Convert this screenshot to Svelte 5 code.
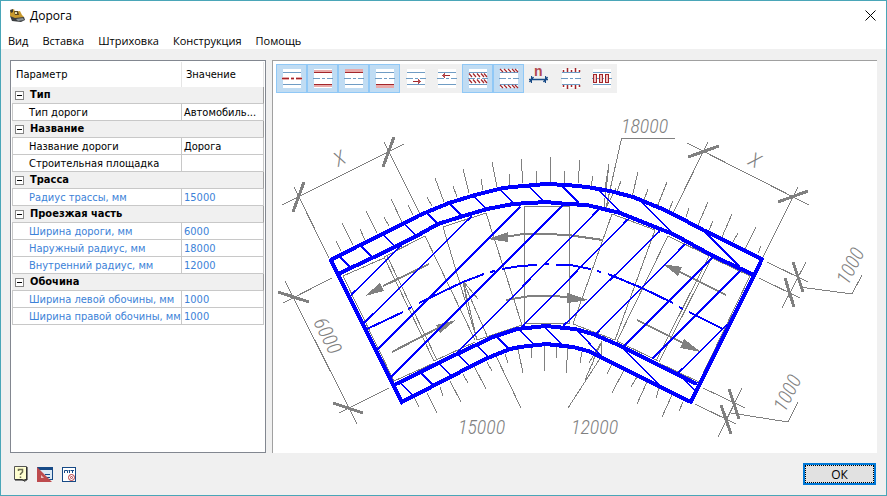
<script>
  const menu = ['Вид', 'Вставка', 'Штриховка', 'Конструкция', 'Помощь'];

  let groups = $state([
    { name: 'Тип', open: true, rows: [{ k: 'Тип дороги', v: 'Автомобиль...' }] },
    {
      name: 'Название', open: true,
      rows: [{ k: 'Название дороги', v: 'Дорога' }, { k: 'Строительная площадка', v: '' }]
    },
    { name: 'Трасса', open: true, rows: [{ k: 'Радиус трассы, мм', v: '15000', num: true }] },
    {
      name: 'Проезжая часть', open: true,
      rows: [
        { k: 'Ширина дороги, мм', v: '6000', num: true },
        { k: 'Наружный радиус, мм', v: '18000', num: true },
        { k: 'Внутренний радиус, мм', v: '12000', num: true }
      ]
    },
    {
      name: 'Обочина', open: true,
      rows: [
        { k: 'Ширина левой обочины, мм', v: '1000', num: true },
        { k: 'Ширина правой обочины, мм', v: '1000', num: true }
      ]
    }
  ]);

  let tools = $state([
    { id: 'axis', label: 'Осевая линия', on: true },
    { id: 'edges', label: 'Кромки', on: true },
    { id: 'left', label: 'Левая обочина', on: true },
    { id: 'right', label: 'Правая обочина', on: true },
    { id: 'forward', label: 'Прямое направление', on: false },
    { id: 'back', label: 'Обратное направление', on: false },
    { id: 'hatchRoad', label: 'Штриховка дороги', on: true },
    { id: 'hatchSide', label: 'Штриховка обочин', on: true },
    { id: 'dim', label: 'Размер', on: false },
    { id: 'slope', label: 'Откосы', on: false },
    { id: 'slabs', label: 'Плиты', on: false }
  ]);

  // Short and long slope strokes along both shoulders
  const slopeStrokes =
    'M336 241L341 251M342 223L353 245M360 229L365 240M366 211L377 233M384 217L389 226M391 199L402 222M408 205L413 215M427 197L432 206M435 178L444 202M453 186L457 197M463 169L469 193M481 179L483 190M492 162L497 187M509 174L510 185M521 159L523 183M536 171V183M551 157L550 183M565 171L564 183M580 160L578 183M593 176L591 187M609 164L605 188M621 181L616 194M638 172L632 197M648 189L644 200M667 182L657 207M673 201L669 210M689 208L686 217M708 202L698 225M713 221L709 230M732 214L722 237M738 233L733 242M756 227L745 249M761 246L758 253' +
    'M413 395L419 407M427 393L437 413M440 387L443 396M450 381L461 402M463 374L468 383M474 366L486 389M487 362L492 371M505 354L508 363M518 349L523 373M531 347L532 358M544 346V371M556 347V358M568 347L566 373M582 352L580 363M595 355L592 365M612 364L607 374M624 370L612 393M637 377L631 387M647 382L637 404M659 388L656 398M672 395L662 417M683 402L679 411';

  const slabs =
    'M524.5 323V206.5H569.5V323ZM486 213L522 325L477 340L443 227ZM425 236L475 340M384 257L425 236M384 257L434 361M387 256L437 360M434 361L475 342M343 276L384 258M343 276L394 381L434 363' +
    'M612 214L573 324L615 340L655 230ZM668 236L617 341M668 236L709 256M709 256L656 361M712 257L659 362M617 341L658 361M712 258L750 276L699 382L659 363';

  const dims =
    'M282 205L404 144M294 187L329 258M384 142L420 214M687 143L809 205M708 142L673 213M798 187L763 257' +
    'M285 281L357 424M283 303L332 278M339 413L389 388' +
    'M767 262L808 282M759 278L800 298M806 262L782 308M800 287L852 294L862 275' +
    'M703 388L745 408M695 404L736 424M742 388L718 437M731 413L788 422L798 402' +
    'M675 138.5H621.5L606 208M609 165L604 207M606 208L616 188' +
    'M463 281L467 303M463 281L478 299M463 281L488 338M496 356L521 408M463 281L477 340' +
    'M602 341L585 380M602 341L601 357L568 408M602 341L589 363';

  const dimTicks =
    'M293 212L304 182M383 167L394 137M688 157L719 146M778 202L808 191M278 292L309 302M333 403L363 413M793 262L803 292M785 278L794 307M729 389L739 419M721 405L731 434';

  const roadHatch =
    'M351 295L402 245M364 323L472 216M377 350L520 207M391 377L563 205M457 353L598 210M522 327L628 219M563 326L660 231M596 334L685 244M623 347L713 257M652 359L740 271M678 373L727 325';

  const sideHatch =
    'M339 256L351 268M360 245L372 257M383 234L394 246M404 224L416 235M427 213L438 224M449 203L461 215M474 197L486 208M501 190L513 203M530 187L543 201M563 187L579 203M600 191L620 212M643 203L672 233M703 230L740 267' +
    'M402 384L412 395M421 373L433 385M439 364L452 376M458 354L470 367M477 345L488 357M497 337L509 349M519 330L533 343M545 328L562 344M577 330L602 357M623 348L659 385M678 373L695 391';

  const outline =
    'M331 260L358 246L383 234L420 215L449 203L475 195L503 188L523 186L546 184L567 185L587 187L610 191L633 197L660 208L673 214L703 230L762 259L691 402L660 387L603 358L588 351L573 347L546 344L520 347L510 349L490 357L460 372L402 402Z' +
    'M338 274L372 258L413 238L438 224L460 217L487 209L513 204L546 202L567 204L587 205L620 213L660 229L673 234L713 256L754 275' +
    'M394 385L457 354L493 337L517 329L546 326L575 329L593 334L623 347L660 366L697 384';

  const axis =
    'M367 329L403 312M408 309L412 307M419 303L463 282L484 274M490 272L495 271M502 269L520 266L537 265M544 264H549M556 265L570 265L591 269M597 271L601 272M608 274L642 288L673 303M679 307L683 309M689 312L723 329';

  const arrowShafts =
    'M603 240L568 235L546 234H523L505 237M506 300L530 296H557L570 298M429 264L383 286M392 352L438 328M726 295L680 272M637 320L683 343';
  const arrowHeads =
    'M488 239L508 232V242ZM588 300L567 293V303ZM365 296L380 283L384 291ZM456 320L436 325L440 333ZM663 264L682 267L678 276ZM701 352L684 339L680 348Z';
</script>

<div class="window">
  <header class="title">
    <svg class="logo" width="17" height="14" viewBox="0 0 17 14" aria-hidden="true">
      <path d="M1 2L5 0L6 3L11 2L13 6L15 8L12 11L5 10L1 7Z" fill="#c99a2e" />
      <path d="M5 2L9 2L10 6L6 6Z" fill="#594620" />
      <path d="M1 1L4 0L4 3L2 4Z" fill="#3d3a33" />
      <path d="M6 3H8V5H6Z" fill="#e9dfae" />
      <path d="M1 7L6 9L15 8L16 11L12 13L3 12Z" fill="#3b3e40" />
      <path d="M7 10L14 9L15 11L9 12Z" fill="#8b9397" />
    </svg>
    <h1>Дорога</h1>
    <button class="close" aria-label="Закрыть">
      <svg width="11" height="11" viewBox="0 0 11 11"><path d="M.5 .5L10.5 10.5M10.5 .5L.5 10.5" stroke="#000" /></svg>
    </button>
  </header>

  <nav>
    {#each menu as m}<button>{m}</button>{/each}
  </nav>

  <main>
    <section class="params">
      <table>
        <colgroup><col class="c1" /><col /></colgroup>
        <thead>
          <tr><th>Параметр</th><th>Значение</th></tr>
        </thead>
        <tbody>
          {#each groups as g}
            <tr class="group">
              <th colspan="2">
                <button onclick={() => (g.open = !g.open)} aria-expanded={g.open}>
                  <svg width="9" height="9" viewBox="0 0 9 9" aria-hidden="true">
                    <rect x=".5" y=".5" width="8" height="8" fill="#fff" stroke="#848484" />
                    <path d={g.open ? 'M2 4.5H7' : 'M2 4.5H7M4.5 2V7'} stroke="#000" />
                  </svg>{g.name}
                </button>
              </th>
            </tr>
            {#if g.open}
              {#each g.rows as r}
                <tr class="item" class:num={r.num}><td>{r.k}</td><td>{r.v}</td></tr>
              {/each}
            {/if}
          {/each}
        </tbody>
      </table>
    </section>

    <section class="view">
      <div class="toolbar">
        {#each tools as t}
          <button class:on={t.on} aria-pressed={t.on} aria-label={t.label} onclick={() => (t.on = !t.on)}>
            <svg width="31" height="29" viewBox="0 0 31 29" shape-rendering="crispEdges">
              {#if t.id === 'dim'}
                <g stroke="#174a86" fill="none" shape-rendering="auto">
                  <path d="M5 15.500H24" stroke-width="1.500" />
                  <path d="M7.500 12V19M21.500 12V19" />
                  <path d="M5.500 18L9.500 13M19.500 18L23.500 13" stroke-width="1.500" />
                </g>
                <text class="letter" x="10" y="12">n</text>
              {:else}
                <rect x="7" y="5" width="18" height="19" fill="#fff" />
                {#if t.id === 'left'}<rect x="7" y="5" width="18" height="3" fill="#e8aaaa" />{/if}
                {#if t.id === 'right'}<rect x="7" y="21" width="18" height="3" fill="#e8aaaa" />{/if}
                {#if t.id === 'edges'}
                  <path d="M7 7.500H25M7 21.500H25" stroke="#e8aaaa" stroke-width="3" />
                {/if}
                {#if t.id === 'axis'}
                  <path d="M6 14.500H13M15 14.500H18M20 14.500H26" stroke="#e8aaaa" stroke-width="3" />
                {/if}
                <path d="M7 8.500H25M7 20.500H25" stroke="#6f9cc4" />
                <path d="M6 14.500H13M15 14.500H18M20 14.500H26" stroke={t.id === 'axis' ? '#a3262b' : '#6f9cc4'} />
                {#if t.id === 'edges' || t.id === 'left'}<path d="M7 8.500H25" stroke="#a3262b" />{/if}
                {#if t.id === 'edges' || t.id === 'right'}<path d="M7 20.500H25" stroke="#a3262b" />{/if}
                {#if t.id === 'forward'}
                  <path d="M13 17.500H21" stroke="#a3262b" />
                  <path d="M18 15L21 17.500L18 20Z" fill="#b34a4f" />
                {/if}
                {#if t.id === 'back'}
                  <path d="M11 11.500H19" stroke="#a3262b" />
                  <path d="M14 9L11 11.500L14 14Z" fill="#b34a4f" />
                {/if}
                {#if t.id === 'hatchRoad'}
                  <g stroke="#a3262b" stroke-width="1.200" shape-rendering="auto">
                    {#each [7, 11, 15, 19, 22] as x}
                      <path d="M{x} 9.500L{x + 3} 13M{x} 15.500L{x + 3} 19" />
                    {/each}
                  </g>
                {/if}
                {#if t.id === 'hatchSide'}
                  <g stroke="#a3262b" stroke-width="1.200" shape-rendering="auto">
                    {#each [7, 11, 15, 19, 22] as x}
                      <path d="M{x} 5L{x + 3} 8M{x} 21L{x + 3} 24" />
                    {/each}
                  </g>
                {/if}
                {#if t.id === 'slope'}
                  <path d="M8.500 6V8M12.500 4V8M16.500 6V8M20.500 4V8M24.500 6V8M8.500 21V23M12.500 21V25M16.500 21V23M20.500 21V25M24.500 21V23" stroke="#a3262b" stroke-width="1.500" shape-rendering="auto" />
                {/if}
                {#if t.id === 'slabs'}
                  {#each [7, 13, 19] as x}
                    <rect x={x + 0.5} y="10.500" width="3" height="8" fill="#efc4c4" stroke="#a3262b" shape-rendering="auto" />
                  {/each}
                {/if}
              {/if}
            </svg>
          </button>
        {/each}
      </div>

      <svg class="drawing" viewBox="273 93 604 358" role="img" aria-label="Схема дороги">
        <g fill="none" shape-rendering="crispEdges">
          <g stroke="#808080">
            <path d={slopeStrokes} />
            <path d={slabs} />
            <path d={dims} />
            <path d={dimTicks} stroke-width="3" />
            <path d={arrowShafts} stroke-width="2" />
          </g>
          <path d={arrowHeads} fill="#808080" />
          <g stroke="#0000ff">
            <path d={roadHatch} stroke-width="1.5" />
            <path d={sideHatch} stroke-width="1.5" />
            <path d={axis} stroke-width="2" />
            <path d={outline} stroke-width="4" />
          </g>
        </g>
        <g class="sizes">
          <text x="621" y="133">18000</text>
          <text x="458" y="434">15000</text>
          <text x="571" y="434">12000</text>
          <text transform="translate(313 322) rotate(63)">6000</text>
          <text transform="translate(848 286) rotate(-63)">1000</text>
          <text transform="translate(785 413) rotate(-63)">1000</text>
          <text transform="translate(338 167) rotate(-27)">X</text>
          <text transform="translate(747 164) rotate(27)">X</text>
        </g>
      </svg>
    </section>
  </main>

  <footer>
    <button class="tool" aria-label="Справка">
      <svg width="14" height="16" viewBox="0 0 14 16">
        <path d="M.5 .5H12.500V13.500H11V15.500L8 13.500H.5Z" fill="#ffffd0" stroke="#555" />
        <path d="M13 1V14H1" stroke="#111" fill="none" />
        <path d="M4.500 5V3.500H8.500V6L6.500 8V9M6.500 10.500V12" stroke="#6b6b50" stroke-width="1.500" fill="none" />
      </svg>
    </button>
    <button class="tool" aria-label="Чертёж">
      <svg width="16" height="15" viewBox="0 0 16 15">
        <rect x=".5" y=".5" width="15" height="12" fill="#dce9f4" stroke="#174a86" />
        <path d="M0 1.500H16" stroke="#174a86" stroke-width="3" />
        <path d="M8 7.500H13M10 10.500H13" stroke="#174a86" />
        <path d="M0 0L15 15H0Z" fill="#bd4a4d" />
        <path d="M4 8L7 11H4Z" fill="#eac3c3" />
      </svg>
    </button>
    <button class="tool" aria-label="Нормативный документ">
      <svg width="14" height="15" viewBox="0 0 14 15">
        <rect x=".5" y=".5" width="13" height="14" fill="#fff" stroke="#174a86" />
        <path d="M0 .5H14M2.500 6V3.500H5.500V6M7.500 3V6M6.500 3.500H8.500M10.500 3V6M9 3.500H12" stroke="#174a86" fill="none" />
        <circle cx="9.500" cy="10.500" r="3" fill="#fff" stroke="#b5383c" />
        <circle cx="9.500" cy="10.500" r="1" fill="#fff" stroke="#b5383c" />
      </svg>
    </button>
    <button class="ok">ОК</button>
  </footer>
</div>

<style>
  .window {
    box-sizing: border-box;
    min-height: 100vh;
    display: flex;
    flex-direction: column;
    border: 1px solid #4aa6b8;
    background: #f0f0f0;
    font-family: 'Open Sans', 'Noto Sans', sans-serif;
    font-size: 12px;
    color: #000;
  }
  button {
    font: inherit;
    color: inherit;
    border: 0;
    padding: 0;
    background: none;
    display: flex;
    align-items: center;
  }
  svg {
    display: block;
  }
  .title {
    display: flex;
    align-items: center;
    gap: 4px;
    height: 29px;
    padding: 0 10px 0 8px;
    background: #fff;
  }
  h1 {
    margin: 0;
    flex: 1;
    font-size: 12px;
    font-weight: 400;
  }
  nav {
    display: flex;
    gap: 14px;
    height: 18px;
    padding: 1px 7px 0;
    background: #fff;
    font-size: 11px;
  }
  main {
    flex: 1;
    display: flex;
    gap: 6px;
    padding: 11px 9px 0;
  }
  .params {
    box-sizing: border-box;
    width: 256px;
    flex: none;
    padding: 1px;
    border: 1px solid #828790;
    background: #fff;
  }
  table {
    width: 252px;
    table-layout: fixed;
    border-collapse: separate;
    border-spacing: 0;
    font-family: 'DejaVu Sans Condensed', 'DejaVu Sans', sans-serif;
    font-size: 11px;
    line-height: 14px;
  }
  .c1 {
    width: 170px;
  }
  td,
  th {
    padding: 0;
    font-weight: 400;
    text-align: left;
    white-space: nowrap;
  }
  thead th {
    height: 24px;
    padding: 1px 0 0 4px;
    border-right: 1px solid #e5e5e5;
  }
  .group th {
    height: 16px;
    border-bottom: 1px solid #c8c8c8;
    border-right: 1px solid #a0a0a0;
    background: #f0f0f0;
  }
  .group button {
    gap: 6px;
    padding-left: 3px;
    font-weight: 700;
    height: 16px;
  }
  .item td {
    height: 14px;
    border-bottom: 1px solid #c8c8c8;
    border-right: 1px solid #c8c8c8;
    padding: 2px 0 0 2px;
  }
  .item td:first-child {
    border-left: 1px solid #c8c8c8;
    padding-left: 16px;
  }
  .num {
    color: #3c82d8;
  }
  .view {
    flex: 1;
    min-width: 0;
    border: solid #a0a0a0;
    border-width: 1px 0 0 1px;
    background: #fff;
  }
  .toolbar {
    display: flex;
    width: fit-content;
    margin: 3px 3px 0;
    background: #f0f0f0;
  }
  .toolbar .on {
    background: #c0dcf3;
    outline: 1px solid #90c8f6;
    outline-offset: -1px;
  }
  .letter {
    font: 700 14px 'Liberation Sans', sans-serif;
    fill: #b34a4f;
  }
  .drawing {
    width: 100%;
  }
  .sizes text {
    font-family: 'Roboto Condensed', 'Liberation Sans', sans-serif;
    font-style: italic;
    font-weight: 300;
    font-size: 20px;
    fill: #808080;
  }
  footer {
    display: flex;
    align-items: center;
    gap: 9px;
    height: 42px;
    padding: 0 10px 0 13px;
  }
  .ok {
    box-sizing: border-box;
    width: 73px;
    height: 22px;
    margin-left: auto;
    justify-content: center;
    border: 2px solid #0078d7;
    outline: 1px dotted #000;
    outline-offset: -3px;
    background: #e1e1e1;
  }
</style>
